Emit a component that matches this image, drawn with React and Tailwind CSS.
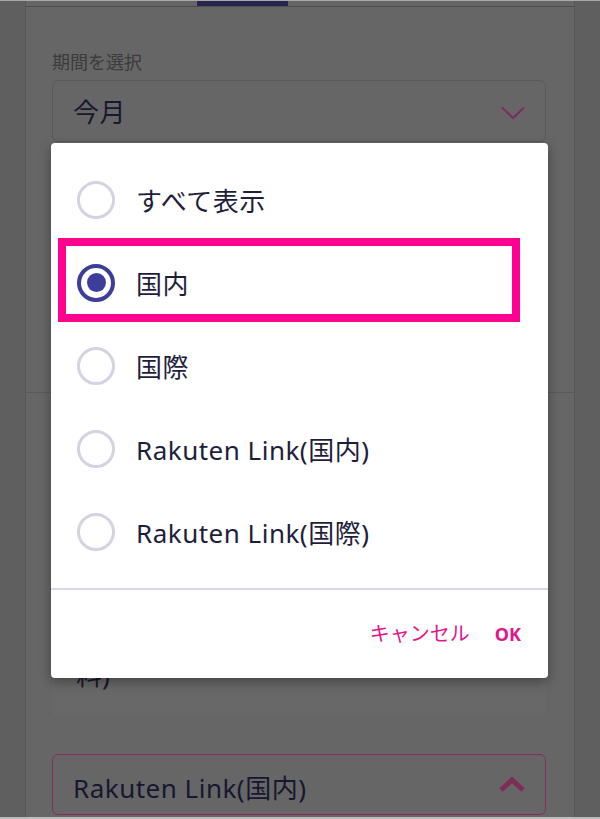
import { useState } from 'react'

const options = ['すべて表示', '国内', '国際', 'Rakuten Link(国内)', 'Rakuten Link(国際)']

const font = { fontFamily: '"Noto Sans", "Noto Sans CJK JP", sans-serif' }

function Radio({ checked }) {
  if (checked) {
    return (
      <span className="w-[38px] h-[38px] rounded-full border-[4px] border-[#3d3d9b] flex items-center justify-center shrink-0">
        <span className="w-[19px] h-[19px] rounded-full bg-[#3d3d9b]" />
      </span>
    )
  }
  return <span className="w-[38px] h-[38px] rounded-full border-[3px] border-[#d4d3e1] shrink-0" />
}

export default function App() {
  const [selected, setSelected] = useState(1)

  return (
    <div
      className="relative w-[600px] h-[819px] overflow-hidden bg-[#5f5f5f] flex flex-col"
      style={font}
    >
      {/* screen top edge */}
      <div className="h-[1px] bg-[#a9a9a9]" />

      <div className="flex-1 flex">
        <div className="w-[26px] border-r border-[#585858]" />

        {/* page card (dimmed behind dialog) */}
        <div className="flex-1 bg-[#666666] flex flex-col">
          <div className="h-[5px] pl-[171px]">
            <div className="w-[91px] h-[5px] bg-[#25254d]" />
          </div>
          <div className="h-[1px] bg-[#4e4e4e]" />

          <div className="px-[26px] pt-[43px]">
            <div className="text-[18px] leading-[24px] text-[#3b3b3b]">期間を選択</div>
            <div className="mt-[6px] mr-[2px] h-[62px] rounded-[6px] border border-[#5a5a5a] flex items-center justify-between pl-[20px] pr-[20px] pt-[3px]">
              <span className="text-[26px] tracking-[0.5px] text-[#17172f]">今月</span>
              <svg width="24" height="14" viewBox="0 0 24 14" fill="none">
                <path d="M1 1.5L12 12L23 1.5" stroke="#7d2c5c" strokeWidth="2" />
              </svg>
            </div>
          </div>

          <div className="h-[250px]" />
          <div className="h-[1px] bg-[#5a5a5a]" />

          <div className="px-[26px] pt-[206px]">
            <div className="h-[117px] mr-[2px] bg-[#686868] rounded-[4px] pl-[24px] pt-[58px]">
              <span className="text-[26px] leading-[36px] text-[#17172f]">料)</span>
            </div>
            <div className="mt-[38px] mr-[2px] h-[61px] rounded-[6px] border-[1.5px] border-[#8a2a5e] flex items-center justify-between pl-[20px] pr-[20px] pt-[8px]">
              <span className="text-[26px] tracking-[0.5px] text-[#17172f]">Rakuten Link(国内)</span>
              <svg width="26" height="16" viewBox="0 0 26 16" fill="none" className="-mt-[8px]">
                <path d="M2 13L13 3L24 13" stroke="#7d2c5c" strokeWidth="5" />
              </svg>
            </div>
          </div>
        </div>

        <div className="w-[26px] border-l border-[#585858]" />
      </div>

      {/* screen bottom edge */}
      <div className="h-[2px] bg-[#bdbdbd]" />

      {/* dialog */}
      <div className="absolute left-[51px] top-[143px] w-[497px] h-[535px] bg-white rounded-[4px] shadow-[0_4px_12px_rgba(0,0,0,0.35)] flex flex-col">
        <div className="pt-[15px] pb-[15px]">
          {options.map((label, i) => (
            <div
              key={label}
              onClick={() => setSelected(i)}
              className="h-[83px] flex items-center pl-[26px] gap-[21px] cursor-pointer"
            >
              <Radio checked={selected === i} />
              <span className="text-[26px] tracking-[0.5px] text-[#1e1e3c] pt-[3px]">{label}</span>
            </div>
          ))}
        </div>
        <div className="h-[2px] bg-[#d8d8e6]" />
        <div className="flex-1 flex items-center justify-end pr-[27px] gap-[25px]">
          <span className="text-[20px] text-[#e0168a]">キャンセル</span>
          <span className="text-[18px] font-bold text-[#e0168a]">OK</span>
        </div>
      </div>

      {/* highlight annotation */}
      <div className="absolute left-[58px] top-[238px] w-[462px] h-[84px] border-[8px] border-[#ff0090]" />
    </div>
  )
}
